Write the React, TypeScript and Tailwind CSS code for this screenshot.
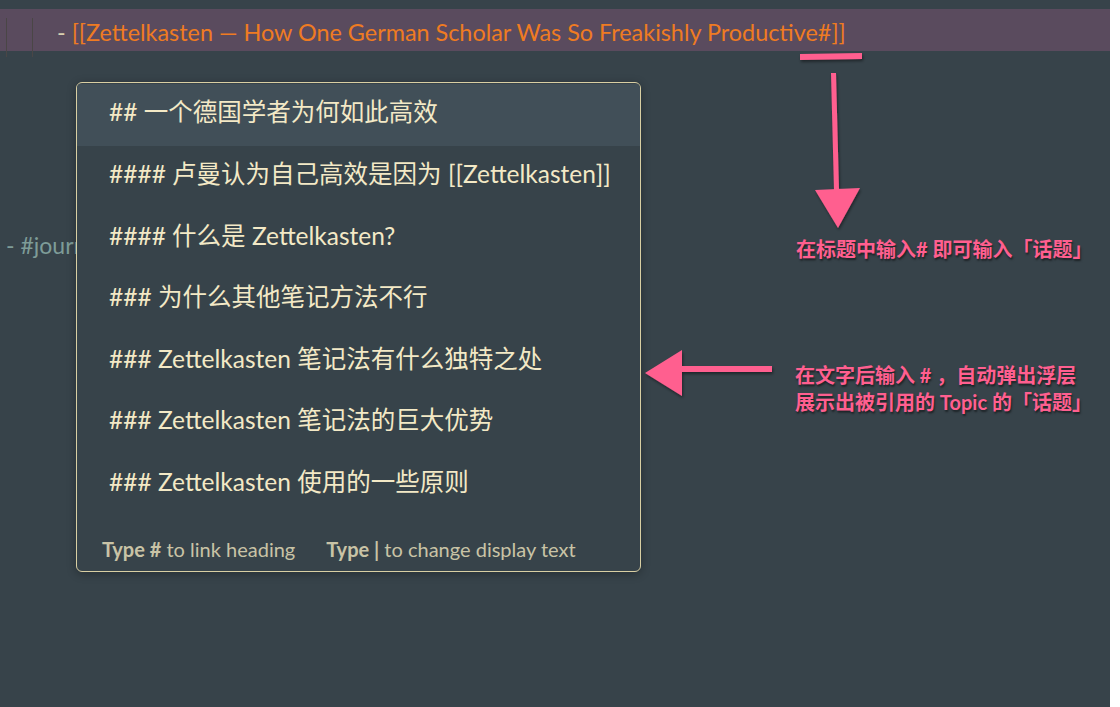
const headings = [
  '## 一个德国学者为何如此高效',
  '#### 卢曼认为自己高效是因为 [[Zettelkasten]]',
  '#### 什么是 Zettelkasten?',
  '### 为什么其他笔记方法不行',
  '### Zettelkasten 笔记法有什么独特之处',
  '### Zettelkasten 笔记法的巨大优势',
  '### Zettelkasten 使用的一些原则',
];

const font = { fontFamily: 'Lato, "Noto Sans CJK SC", sans-serif' };

function Popup() {
  return (
    <div className="absolute left-[76px] top-[82px] w-[565px] h-[490px] rounded-[6px] border border-[#d9cfa3] bg-[#37434a] shadow-[0_2px_10px_rgba(0,0,0,0.3)] overflow-hidden">
      <div className="flex flex-col pt-[1px]">
        {headings.map((h, i) => (
          <div
            key={h}
            className={
              'h-[61.6px] flex items-center pl-[32px] pb-[4px] text-[24.5px] text-[#f3e9c6] ' +
              (i === 0 ? 'bg-[#414f58]' : '')
            }
          >
            {h}
          </div>
        ))}
      </div>
      <div className="flex items-center gap-[31px] pl-[25px] pt-[19px] text-[20px] text-[#c9c3a6]">
        <span>
          <b className="font-bold">Type #</b> to link heading
        </span>
        <span>
          <b className="font-bold">Type |</b> to change display text
        </span>
      </div>
    </div>
  );
}

function Annotations() {
  return (
    <svg className="absolute left-0 top-0 pointer-events-none" width="1110" height="707">
      <defs>
        <filter id="sh" x="-20%" y="-20%" width="140%" height="140%">
          <feDropShadow dx="1" dy="2" stdDeviation="1.5" floodColor="#000" floodOpacity="0.45" />
        </filter>
      </defs>
      <g fill="#ff5f8f" filter="url(#sh)">
        <polygon points="800,54 862,53 862,59 800,60" />
        <polygon points="831,73 836,73 839,190 834,190" />
        <polygon points="815,190 860,188 838,228" />
        <polygon points="645,373 682,350 682,366 772,366 772,372 682,372 682,396" />
      </g>
    </svg>
  );
}

export default function App() {
  return (
    <div className="w-[1120px] h-[707px] bg-white" style={font}>
      <div className="relative w-[1110px] h-[707px] bg-[#37434a] overflow-hidden pt-[9px]">
        <div className="h-[42px] bg-[#5a4b5e] flex items-center pl-[57px] pt-[5px] text-[23.4px] text-[#ef7b22]">
          <span className="text-[#d8d0b0] mr-[6px]">-</span>
          <span>[[Zettelkasten — How One German Scholar Was So Freakishly Productive#]]</span>
        </div>
        <div className="absolute left-[6px] top-[18px] h-[39px] w-[1px] bg-[#4a4646]" />
        <div className="absolute left-[32px] top-[18px] h-[39px] w-[1px] bg-[#4a4646]" />

        <div className="mt-[177px] pl-[6px] text-[23px] text-[#7e9c98]">- #journal</div>

        <Popup />
        <Annotations />

        <div className="absolute left-[796px] top-[234px] text-[20px] font-bold text-[#ff5f8f] [text-shadow:1px_2px_2px_rgba(0,0,0,0.5)]">
          在标题中输入# 即可输入「话题」
        </div>
        <div className="absolute left-[795px] top-[362px] text-[20px] leading-[27px] font-bold text-[#ff5f8f] [text-shadow:1px_2px_2px_rgba(0,0,0,0.5)]">
          <div>在文字后输入 # ，自动弹出浮层</div>
          <div>展示出被引用的 Topic 的「话题」</div>
        </div>
      </div>
    </div>
  );
}
